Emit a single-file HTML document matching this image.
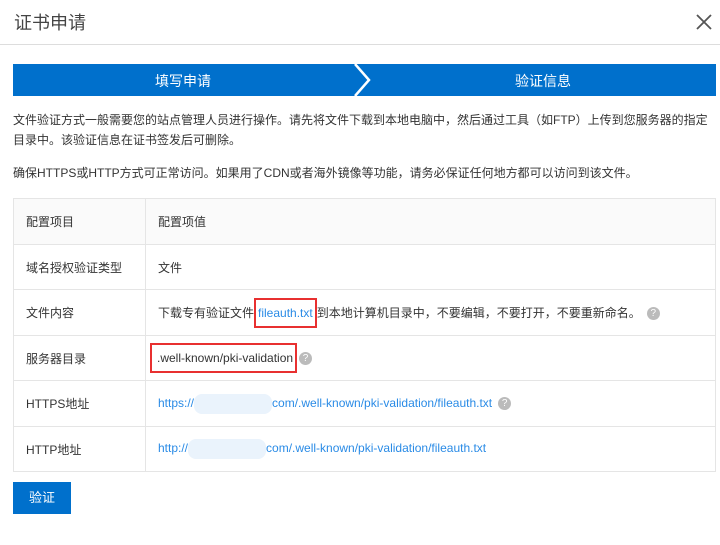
<!DOCTYPE html>
<html><head><meta charset="utf-8"><style>
*{margin:0;padding:0;box-sizing:border-box}
body{width:720px;height:545px;background:#fff;font-family:"Liberation Sans","Noto Sans CJK SC",sans-serif;font-size:12px;color:#333;position:relative;overflow:hidden}
.hd{position:absolute;left:0;top:0;width:720px;height:45px;border-bottom:1px solid #ddd}
.hd .t{position:absolute;left:14px;top:9px;font-size:18px;color:#444}
.x{position:absolute;right:8px;top:14px}
.steps{position:absolute;left:13px;top:64px;width:703px;height:32px;background:#0070cc;color:#fff;font-size:14px}
.steps span{position:absolute;top:7px}
p.d{position:absolute;left:13px;width:700px;line-height:20px}
table{position:absolute;left:13px;top:198px;width:703px;border-collapse:collapse}
td{border:1px solid #e5e5e5;height:46px;padding-left:12px;vertical-align:middle}
td:first-child{width:132px}
tr.s td{height:45px}
tr.h td{background:#fafafa}
a{color:#2a8be6;text-decoration:none}
.q{display:inline-block;width:13px;height:13px;border-radius:50%;background:#bbb;color:#fff;font-size:10px;text-align:center;line-height:13px;vertical-align:middle;margin-left:6px}
.red{border:2px solid #e83030;padding:6px 2px}
.blur{display:inline-block;width:78px;height:20px;background:#eaf3fc;border-radius:8px;vertical-align:middle}
.btn{position:absolute;left:13px;top:482px;width:58px;height:32px;background:#0070cc;color:#fff;text-align:center;line-height:32px;font-size:13px}
</style></head><body>
<div class="hd"><div class="t">证书申请</div>
<svg class="x" width="16" height="16" viewBox="0 0 16 16"><path d="M1 1L15 15M15 1L1 15" stroke="#555" stroke-width="1.8"/></svg></div>
<div class="steps"><span style="left:142px">填写申请</span><span style="left:502px">验证信息</span>
<svg style="position:absolute;left:340px;top:0" width="22" height="32" viewBox="0 0 22 32"><path d="M2 0L16 16L2 32" stroke="#fff" stroke-width="2.5" fill="none"/></svg></div>
<p class="d" style="top:110px">文件验证方式一般需要您的站点管理人员进行操作。请先将文件下载到本地电脑中，然后通过工具（如FTP）上传到您服务器的指定目录中。该验证信息在证书签发后可删除。</p>
<p class="d" style="top:163px">确保HTTPS或HTTP方式可正常访问。如果用了CDN或者海外镜像等功能，请务必保证任何地方都可以访问到该文件。</p>
<table>
<tr class="h"><td>配置项目</td><td>配置项值</td></tr>
<tr class="s"><td>域名授权验证类型</td><td>文件</td></tr>
<tr><td>文件内容</td><td>下载专有验证文件<a class="red" href="#">fileauth.txt</a>到本地计算机目录中，不要编辑，不要打开，不要重新命名。<span class="q">?</span></td></tr>
<tr class="s"><td>服务器目录</td><td><span class="red" style="margin-left:-8px;padding:6px 2px 6px 5px">.well-known/pki-validation</span><span class="q" style="margin-left:2px">?</span></td></tr>
<tr><td>HTTPS地址</td><td><a href="#">https://<span class="blur"></span>com/.well-known/pki-validation/fileauth.txt</a><span class="q">?</span></td></tr>
<tr class="s"><td>HTTP地址</td><td><a href="#">http://<span class="blur"></span>com/.well-known/pki-validation/fileauth.txt</a></td></tr>
</table>
<div class="btn">验证</div>
</body></html>
